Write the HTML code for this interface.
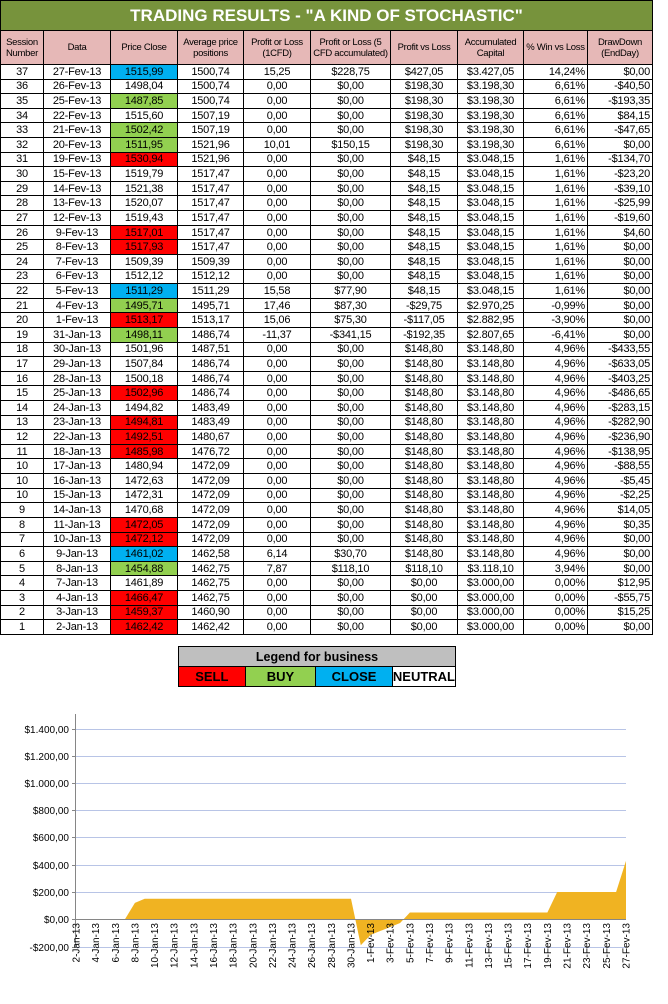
<!DOCTYPE html>
<html><head><meta charset="utf-8"><style>
body{margin:0;background:#fff;width:668px;height:1004px;position:relative;overflow:hidden;font-family:"Liberation Sans",Arial,sans-serif;}
.g{position:absolute;left:0;top:0;display:grid;grid-template-columns:43px 67px 67px 66px 67px 80px 67px 66px 64px 65px;grid-template-rows:30px 34px repeat(39,14.62px);border-left:1px solid #000;border-top:1px solid #000;box-sizing:border-box;}
.g>div{border-right:1px solid #000;border-bottom:1px solid #000;font-size:11px;padding:0 2px;display:flex;align-items:center;justify-content:center;text-align:center;white-space:nowrap;overflow:hidden;letter-spacing:-0.2px;box-sizing:border-box;}
.g>div.t{grid-column:1/-1;background:#77933c;color:#fff;font-weight:bold;font-size:17px;letter-spacing:0;}
.g>div.h{background:#e6b8b7;font-size:9.5px;line-height:11px;letter-spacing:-0.3px;white-space:normal;padding:0 1px;}
.g>div.r{justify-content:flex-end;}
.R{background:#ff0000}.G{background:#92d050}.B{background:#00b0f0}
#lg{position:absolute;left:178px;top:646px;border-collapse:collapse;width:278px;}
#lg tr{height:20px;}
#lg td{border:1.5px solid #000;font-size:13px;font-weight:bold;line-height:18px;padding:0;letter-spacing:0;text-align:center;}
</style></head><body>
<div class="g">
<div class="t">TRADING RESULTS - "A KIND OF STOCHASTIC"</div>
<div class="h">Session Number</div><div class="h">Data</div><div class="h">Price Close</div><div class="h">Average price positions</div><div class="h">Profit or Loss (1CFD)</div><div class="h">Profit or Loss (5 CFD accumulated)</div><div class="h">Profit vs Loss</div><div class="h">Accumulated Capital</div><div class="h">% Win vs Loss</div><div class="h">DrawDown (EndDay)</div>
<div>37</div><div>27-Fev-13</div><div class="B">1515,99</div><div>1500,74</div><div>15,25</div><div>$228,75</div><div>$427,05</div><div>$3.427,05</div><div class="r">14,24%</div><div class="r">$0,00</div>
<div>36</div><div>26-Fev-13</div><div>1498,04</div><div>1500,74</div><div>0,00</div><div>$0,00</div><div>$198,30</div><div>$3.198,30</div><div class="r">6,61%</div><div class="r">-$40,50</div>
<div>35</div><div>25-Fev-13</div><div class="G">1487,85</div><div>1500,74</div><div>0,00</div><div>$0,00</div><div>$198,30</div><div>$3.198,30</div><div class="r">6,61%</div><div class="r">-$193,35</div>
<div>34</div><div>22-Fev-13</div><div>1515,60</div><div>1507,19</div><div>0,00</div><div>$0,00</div><div>$198,30</div><div>$3.198,30</div><div class="r">6,61%</div><div class="r">$84,15</div>
<div>33</div><div>21-Fev-13</div><div class="G">1502,42</div><div>1507,19</div><div>0,00</div><div>$0,00</div><div>$198,30</div><div>$3.198,30</div><div class="r">6,61%</div><div class="r">-$47,65</div>
<div>32</div><div>20-Fev-13</div><div class="G">1511,95</div><div>1521,96</div><div>10,01</div><div>$150,15</div><div>$198,30</div><div>$3.198,30</div><div class="r">6,61%</div><div class="r">$0,00</div>
<div>31</div><div>19-Fev-13</div><div class="R">1530,94</div><div>1521,96</div><div>0,00</div><div>$0,00</div><div>$48,15</div><div>$3.048,15</div><div class="r">1,61%</div><div class="r">-$134,70</div>
<div>30</div><div>15-Fev-13</div><div>1519,79</div><div>1517,47</div><div>0,00</div><div>$0,00</div><div>$48,15</div><div>$3.048,15</div><div class="r">1,61%</div><div class="r">-$23,20</div>
<div>29</div><div>14-Fev-13</div><div>1521,38</div><div>1517,47</div><div>0,00</div><div>$0,00</div><div>$48,15</div><div>$3.048,15</div><div class="r">1,61%</div><div class="r">-$39,10</div>
<div>28</div><div>13-Fev-13</div><div>1520,07</div><div>1517,47</div><div>0,00</div><div>$0,00</div><div>$48,15</div><div>$3.048,15</div><div class="r">1,61%</div><div class="r">-$25,99</div>
<div>27</div><div>12-Fev-13</div><div>1519,43</div><div>1517,47</div><div>0,00</div><div>$0,00</div><div>$48,15</div><div>$3.048,15</div><div class="r">1,61%</div><div class="r">-$19,60</div>
<div>26</div><div>9-Fev-13</div><div class="R">1517,01</div><div>1517,47</div><div>0,00</div><div>$0,00</div><div>$48,15</div><div>$3.048,15</div><div class="r">1,61%</div><div class="r">$4,60</div>
<div>25</div><div>8-Fev-13</div><div class="R">1517,93</div><div>1517,47</div><div>0,00</div><div>$0,00</div><div>$48,15</div><div>$3.048,15</div><div class="r">1,61%</div><div class="r">$0,00</div>
<div>24</div><div>7-Fev-13</div><div>1509,39</div><div>1509,39</div><div>0,00</div><div>$0,00</div><div>$48,15</div><div>$3.048,15</div><div class="r">1,61%</div><div class="r">$0,00</div>
<div>23</div><div>6-Fev-13</div><div>1512,12</div><div>1512,12</div><div>0,00</div><div>$0,00</div><div>$48,15</div><div>$3.048,15</div><div class="r">1,61%</div><div class="r">$0,00</div>
<div>22</div><div>5-Fev-13</div><div class="B">1511,29</div><div>1511,29</div><div>15,58</div><div>$77,90</div><div>$48,15</div><div>$3.048,15</div><div class="r">1,61%</div><div class="r">$0,00</div>
<div>21</div><div>4-Fev-13</div><div class="G">1495,71</div><div>1495,71</div><div>17,46</div><div>$87,30</div><div>-$29,75</div><div>$2.970,25</div><div class="r">-0,99%</div><div class="r">$0,00</div>
<div>20</div><div>1-Fev-13</div><div class="R">1513,17</div><div>1513,17</div><div>15,06</div><div>$75,30</div><div>-$117,05</div><div>$2.882,95</div><div class="r">-3,90%</div><div class="r">$0,00</div>
<div>19</div><div>31-Jan-13</div><div class="G">1498,11</div><div>1486,74</div><div>-11,37</div><div>-$341,15</div><div>-$192,35</div><div>$2.807,65</div><div class="r">-6,41%</div><div class="r">$0,00</div>
<div>18</div><div>30-Jan-13</div><div>1501,96</div><div>1487,51</div><div>0,00</div><div>$0,00</div><div>$148,80</div><div>$3.148,80</div><div class="r">4,96%</div><div class="r">-$433,55</div>
<div>17</div><div>29-Jan-13</div><div>1507,84</div><div>1486,74</div><div>0,00</div><div>$0,00</div><div>$148,80</div><div>$3.148,80</div><div class="r">4,96%</div><div class="r">-$633,05</div>
<div>16</div><div>28-Jan-13</div><div>1500,18</div><div>1486,74</div><div>0,00</div><div>$0,00</div><div>$148,80</div><div>$3.148,80</div><div class="r">4,96%</div><div class="r">-$403,25</div>
<div>15</div><div>25-Jan-13</div><div class="R">1502,96</div><div>1486,74</div><div>0,00</div><div>$0,00</div><div>$148,80</div><div>$3.148,80</div><div class="r">4,96%</div><div class="r">-$486,65</div>
<div>14</div><div>24-Jan-13</div><div>1494,82</div><div>1483,49</div><div>0,00</div><div>$0,00</div><div>$148,80</div><div>$3.148,80</div><div class="r">4,96%</div><div class="r">-$283,15</div>
<div>13</div><div>23-Jan-13</div><div class="R">1494,81</div><div>1483,49</div><div>0,00</div><div>$0,00</div><div>$148,80</div><div>$3.148,80</div><div class="r">4,96%</div><div class="r">-$282,90</div>
<div>12</div><div>22-Jan-13</div><div class="R">1492,51</div><div>1480,67</div><div>0,00</div><div>$0,00</div><div>$148,80</div><div>$3.148,80</div><div class="r">4,96%</div><div class="r">-$236,90</div>
<div>11</div><div>18-Jan-13</div><div class="R">1485,98</div><div>1476,72</div><div>0,00</div><div>$0,00</div><div>$148,80</div><div>$3.148,80</div><div class="r">4,96%</div><div class="r">-$138,95</div>
<div>10</div><div>17-Jan-13</div><div>1480,94</div><div>1472,09</div><div>0,00</div><div>$0,00</div><div>$148,80</div><div>$3.148,80</div><div class="r">4,96%</div><div class="r">-$88,55</div>
<div>10</div><div>16-Jan-13</div><div>1472,63</div><div>1472,09</div><div>0,00</div><div>$0,00</div><div>$148,80</div><div>$3.148,80</div><div class="r">4,96%</div><div class="r">-$5,45</div>
<div>10</div><div>15-Jan-13</div><div>1472,31</div><div>1472,09</div><div>0,00</div><div>$0,00</div><div>$148,80</div><div>$3.148,80</div><div class="r">4,96%</div><div class="r">-$2,25</div>
<div>9</div><div>14-Jan-13</div><div>1470,68</div><div>1472,09</div><div>0,00</div><div>$0,00</div><div>$148,80</div><div>$3.148,80</div><div class="r">4,96%</div><div class="r">$14,05</div>
<div>8</div><div>11-Jan-13</div><div class="R">1472,05</div><div>1472,09</div><div>0,00</div><div>$0,00</div><div>$148,80</div><div>$3.148,80</div><div class="r">4,96%</div><div class="r">$0,35</div>
<div>7</div><div>10-Jan-13</div><div class="R">1472,12</div><div>1472,09</div><div>0,00</div><div>$0,00</div><div>$148,80</div><div>$3.148,80</div><div class="r">4,96%</div><div class="r">$0,00</div>
<div>6</div><div>9-Jan-13</div><div class="B">1461,02</div><div>1462,58</div><div>6,14</div><div>$30,70</div><div>$148,80</div><div>$3.148,80</div><div class="r">4,96%</div><div class="r">$0,00</div>
<div>5</div><div>8-Jan-13</div><div class="G">1454,88</div><div>1462,75</div><div>7,87</div><div>$118,10</div><div>$118,10</div><div>$3.118,10</div><div class="r">3,94%</div><div class="r">$0,00</div>
<div>4</div><div>7-Jan-13</div><div>1461,89</div><div>1462,75</div><div>0,00</div><div>$0,00</div><div>$0,00</div><div>$3.000,00</div><div class="r">0,00%</div><div class="r">$12,95</div>
<div>3</div><div>4-Jan-13</div><div class="R">1466,47</div><div>1462,75</div><div>0,00</div><div>$0,00</div><div>$0,00</div><div>$3.000,00</div><div class="r">0,00%</div><div class="r">-$55,75</div>
<div>2</div><div>3-Jan-13</div><div class="R">1459,37</div><div>1460,90</div><div>0,00</div><div>$0,00</div><div>$0,00</div><div>$3.000,00</div><div class="r">0,00%</div><div class="r">$15,25</div>
<div>1</div><div>2-Jan-13</div><div class="R">1462,42</div><div>1462,42</div><div>0,00</div><div>$0,00</div><div>$0,00</div><div>$3.000,00</div><div class="r">0,00%</div><div class="r">$0,00</div>
</div>

<table id="lg">
<tr><td colspan="4" style="background:#bfbfbf;font-size:12.5px;">Legend for business</td></tr>
<tr><td class="R" style="width:66px">SELL</td><td class="G" style="width:70px">BUY</td><td class="B" style="width:76px">CLOSE</td><td style="background:#fff">NEUTRAL</td></tr>
</table>

<svg width="668" height="1004" style="position:absolute;left:0;top:0" font-family="Liberation Sans, Arial, sans-serif">
<g stroke="#b8c4e6" stroke-width="1">
<line x1="76" y1="729.5" x2="626" y2="729.5"/><line x1="76" y1="756.5" x2="626" y2="756.5"/><line x1="76" y1="783.5" x2="626" y2="783.5"/><line x1="76" y1="810.5" x2="626" y2="810.5"/><line x1="76" y1="837.5" x2="626" y2="837.5"/><line x1="76" y1="865.5" x2="626" y2="865.5"/><line x1="76" y1="892.5" x2="626" y2="892.5"/><line x1="76" y1="947.5" x2="626" y2="947.5"/>
</g>
<path d="M76,919 L125.1,919 L134.9,902.9 L144.7,898.8 L351,898.8 L360.8,945.2 L370.6,934.9 L400.1,923 L409.9,912.5 L547.4,912.5 L557.2,892 L616.1,892 L626,860.9 L626,919 Z" fill="#f0b322"/>
<g stroke="#868686" stroke-width="1">
<line x1="75.5" y1="714" x2="75.5" y2="948"/><line x1="75" y1="919.5" x2="626" y2="919.5"/>
<line x1="72" y1="729.5" x2="76" y2="729.5"/><line x1="72" y1="756.5" x2="76" y2="756.5"/><line x1="72" y1="783.5" x2="76" y2="783.5"/><line x1="72" y1="810.5" x2="76" y2="810.5"/><line x1="72" y1="837.5" x2="76" y2="837.5"/><line x1="72" y1="865.5" x2="76" y2="865.5"/><line x1="72" y1="892.5" x2="76" y2="892.5"/><line x1="72" y1="919.5" x2="76" y2="919.5"/><line x1="72" y1="947.5" x2="76" y2="947.5"/>
</g>
<g font-size="10" text-anchor="end" fill="#000">
<text x="69" y="733">$1.400,00</text><text x="69" y="760">$1.200,00</text><text x="69" y="787">$1.000,00</text><text x="69" y="814">$800,00</text><text x="69" y="841">$600,00</text><text x="69" y="869">$400,00</text><text x="69" y="896">$200,00</text><text x="69" y="923">$0,00</text><text x="69" y="951">-$200,00</text>
</g>
<g font-size="10" text-anchor="end" fill="#000">
<text transform="translate(79.5,923) rotate(-90)">2-Jan-13</text>
<text transform="translate(99.1,923) rotate(-90)">4-Jan-13</text>
<text transform="translate(118.8,923) rotate(-90)">6-Jan-13</text>
<text transform="translate(138.4,923) rotate(-90)">8-Jan-13</text>
<text transform="translate(158.1,923) rotate(-90)">10-Jan-13</text>
<text transform="translate(177.7,923) rotate(-90)">12-Jan-13</text>
<text transform="translate(197.3,923) rotate(-90)">14-Jan-13</text>
<text transform="translate(217,923) rotate(-90)">16-Jan-13</text>
<text transform="translate(236.6,923) rotate(-90)">18-Jan-13</text>
<text transform="translate(256.3,923) rotate(-90)">20-Jan-13</text>
<text transform="translate(275.9,923) rotate(-90)">22-Jan-13</text>
<text transform="translate(295.5,923) rotate(-90)">24-Jan-13</text>
<text transform="translate(315.2,923) rotate(-90)">26-Jan-13</text>
<text transform="translate(334.8,923) rotate(-90)">28-Jan-13</text>
<text transform="translate(354.5,923) rotate(-90)">30-Jan-13</text>
<text transform="translate(374.1,923) rotate(-90)">1-Fev-13</text>
<text transform="translate(393.7,923) rotate(-90)">3-Fev-13</text>
<text transform="translate(413.4,923) rotate(-90)">5-Fev-13</text>
<text transform="translate(433,923) rotate(-90)">7-Fev-13</text>
<text transform="translate(452.7,923) rotate(-90)">9-Fev-13</text>
<text transform="translate(472.3,923) rotate(-90)">11-Fev-13</text>
<text transform="translate(491.9,923) rotate(-90)">13-Fev-13</text>
<text transform="translate(511.6,923) rotate(-90)">15-Fev-13</text>
<text transform="translate(531.2,923) rotate(-90)">17-Fev-13</text>
<text transform="translate(550.9,923) rotate(-90)">19-Fev-13</text>
<text transform="translate(570.5,923) rotate(-90)">21-Fev-13</text>
<text transform="translate(590.1,923) rotate(-90)">23-Fev-13</text>
<text transform="translate(609.8,923) rotate(-90)">25-Fev-13</text>
<text transform="translate(629.4,923) rotate(-90)">27-Fev-13</text>
</g>
</svg>
</body></html>
